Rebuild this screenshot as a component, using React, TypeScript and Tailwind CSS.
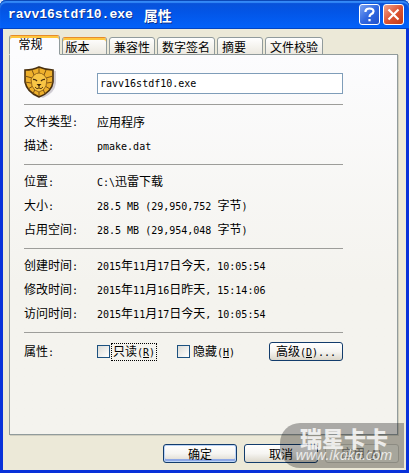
import React, { useState } from 'react';
import { clsx } from 'clsx';

interface Row {
  label: string;
  value: string;
}

const tabs = [
  { id: 'general', title: '常规', width: 'w-[51px]' },
  { id: 'version', title: '版本', width: 'w-[45px]' },
  { id: 'compat', title: '兼容性', width: 'w-[46px]' },
  { id: 'signature', title: '数字签名', width: 'w-[58px]' },
  { id: 'summary', title: '摘要', width: 'w-[46px]' },
  { id: 'checksum', title: '文件校验', width: 'w-[58px]' },
];

const sections: Row[][] = [
  [
    { label: '文件类型:', value: '应用程序' },
    { label: '描述:', value: 'pmake.dat' },
  ],
  [
    { label: '位置:', value: 'C:\\迅雷下载' },
    { label: '大小:', value: '28.5 MB (29,950,752 字节)' },
    { label: '占用空间:', value: '28.5 MB (29,954,048 字节)' },
  ],
  [
    { label: '创建时间:', value: '2015年11月17日今天, 10:05:54' },
    { label: '修改时间:', value: '2015年11月16日昨天, 15:14:06' },
    { label: '访问时间:', value: '2015年11月17日今天, 10:05:54' },
  ],
];

// Latin runs are half the width of a Chinese character
const Mixed = ({ text }: { text: string }) => (
  <span className="whitespace-pre">
    {text.split(/([ -~]+)/).map((part, i) =>
      i % 2 === 1 ? (
        <span key={i} className="font-['DejaVu_Sans_Mono',monospace] text-[10px]">
          {part}
        </span>
      ) : (
        part
      )
    )}
  </span>
);

const Mnemonic = ({ text, letter }: { text: string; letter: string }) => (
  <span className="whitespace-pre">
    {text}
    <span className="font-['DejaVu_Sans_Mono',monospace] text-[10px]">
      (<u>{letter}</u>)
    </span>
  </span>
);

const LionIcon = () => (
  <svg width="34" height="34" viewBox="0 0 34 34" aria-hidden="true">
    <path d="M3 5Q11 4 18 2Q25 5 32 5V17Q31 27 19 32Q7 28 4 18Z" fill="#b9b4bd" opacity=".65" />
    <path d="M1 4Q9 4 15 1Q22 4 29 4V16Q28 26 15 31Q3 26 1 16Z" fill="#eeb02c" stroke="#49300f" strokeWidth="1.6" />
    <path
      d="M8 4L10 9M15 2V7M22 4L20 9M1 10L8 12M29 10L22 12M1 16L7 17M29 16L23 17M4 23L9 20M26 23L21 20M9 28L11 23M21 28L19 23M15 26V30"
      stroke="#7a5214"
      strokeWidth="1"
    />
    <path d="M10 9Q15 5 20 9L23 13L22 20Q20 25 15 26Q10 25 8 20L7 13Z" fill="#f8c545" stroke="#8a5c18" strokeWidth=".9" />
    <path d="M9 13.500Q11 13 13 15M21 13.500Q19 13 17 15" fill="none" stroke="#49300f" strokeWidth="1.4" />
    <path d="M12.500 18H17.500L15 20.500Z" fill="#3b250b" />
    <path d="M15 20V22M11 21Q13 24 15 22Q17 24 19 21" fill="none" stroke="#5b3c10" strokeWidth="1" />
  </svg>
);

const PushButton = ({
  children,
  isDefault = false,
  disabled = false,
}: {
  children: React.ReactNode;
  isDefault?: boolean;
  disabled?: boolean;
}) => (
  <button
    type="button"
    disabled={disabled}
    className={clsx(
      'flex h-[19px] w-[74px] items-center justify-center rounded-[3px] border leading-4',
      disabled
        ? 'border-[#c9c7ba] bg-[#f0eee0] text-[#85847a]'
        : 'border-[#123c6c] bg-linear-to-b from-white via-[#f6f5f2] to-[#dcd7cb]',
      isDefault && 'shadow-[inset_0_0_0_1px_#bcd4f6,inset_0_-2px_0_1px_#8ea8e6]'
    )}
  >
    {children}
  </button>
);

const CheckBox = ({ text, letter, focused = false }: { text: string; letter: string; focused?: boolean }) => (
  <label className="flex w-20 items-center">
    <input
      type="checkbox"
      className="mr-px size-[13px] shrink-0 appearance-none border border-[#1c5180] bg-linear-to-br from-[#dcdcd7] to-white checked:bg-[#21a121]"
    />
    <span className={clsx('border px-px leading-[14px]', focused ? 'border-dotted border-black' : 'border-transparent')}>
      <Mnemonic text={text} letter={letter} />
    </span>
  </label>
);

const TitleBar = () => (
  <header className="flex h-[29px] shrink-0 items-center gap-[3px] rounded-t-md bg-linear-to-b from-[#0a51d5] from-0% via-[#0355e6] via-40% to-[#0262fb] pr-[5px] pl-2 shadow-[inset_0_1px_0_#0c48b7,inset_0_3px_1px_#3489f7,inset_0_-1px_0_#0144c4]">
    <h1 className="flex flex-1 items-center gap-[11px] text-[14px] leading-5 font-bold text-white [text-shadow:1px_1px_#0b2f8c]">
      <span className="font-['Liberation_Mono',monospace] text-[13px]">ravv16stdf10.exe</span>
      <span>属性</span>
    </h1>
    <button
      type="button"
      aria-label="帮助"
      className="flex size-[21px] items-center justify-center rounded-[3px] border border-white bg-linear-to-br from-[#7ba2f2] via-[#3268e0] to-[#1e50cb]"
    >
      <svg width="13" height="15" viewBox="0 0 13 15" fill="none" stroke="#fff" strokeWidth="2.200">
        <path d="M2.500 5V4Q3 1.500 6.500 1.500Q10.500 1.500 10.500 4.500Q10.500 6 8 7.200Q6.500 8 6.500 10" />
        <path d="M6.500 12V14.300" />
      </svg>
    </button>
    <button
      type="button"
      aria-label="关闭"
      className="flex size-[21px] items-center justify-center rounded-[3px] border border-white bg-linear-to-br from-[#f0a18c] via-[#dd5433] to-[#c23a14]"
    >
      <svg width="13" height="13" viewBox="0 0 13 13" stroke="#fff" strokeWidth="2.200">
        <path d="M1.500 1.500L11.500 11.500M11.500 1.500L1.500 11.500" />
      </svg>
    </button>
  </header>
);

const Watermark = () => (
  <div className="pointer-events-none absolute right-[5px] bottom-[5px] flex h-[45px] w-[124px] flex-col items-center rounded-l-[20px] bg-black/30 pt-1 pl-1 text-white/80">
    <span className="text-[22px] leading-5 font-black">瑞星卡卡</span>
    <span className="font-['Open_Sans',sans-serif] text-[14px] leading-4 italic">www.ikaka.com</span>
  </div>
);

export default function App() {
  const [active, setActive] = useState('general');
  const [name, setName] = useState('ravv16stdf10.exe');

  return (
    <div className="bg-[#d9e4f8]">
      <div className="relative flex min-h-screen w-full flex-col rounded-t-md bg-[#0831d9] font-['Noto_Sans_CJK_SC',sans-serif] text-[12px] text-black">
        <TitleBar />
        <main className="mr-[3px] mb-[3px] ml-[3px] flex flex-1 flex-col bg-[#ece9d8] pt-1.5 pr-2 pb-[7px] pl-1.5">
          <div role="tablist" className="relative -mb-px flex items-end gap-0.5">
            {tabs.map((tab) => (
              <button
                key={tab.id}
                type="button"
                role="tab"
                aria-selected={active === tab.id}
                onClick={() => setActive(tab.id)}
                className={clsx(
                  'rounded-t-[3px] border whitespace-nowrap',
                  tab.width,
                  active === tab.id
                    ? 'h-5 border-[#919b9c] border-t-[#e68b2c] border-b-[#fcfcfe] bg-[#fcfcfe] pr-2 pb-0.5 pl-0 leading-4 shadow-[inset_0_2px_0_#ffc73c]'
                    : 'h-[18px] border-[#919b9c] bg-linear-to-b from-white to-[#ece9e0] leading-[17px]',
                  tab.id === 'version' && active !== tab.id && 'border-t-[#e68b2c] pr-3.5 shadow-[inset_0_2px_0_#ffc73c]',
                  tab.id === 'summary' && 'pr-3'
                )}
              >
                {tab.title}
              </button>
            ))}
          </div>

          <section className="flex-1 border border-[#919b9c] bg-linear-to-b from-[#fcfcfe] to-[#f4f3ee] to-60% pt-[11px] pr-[54px] pl-3.5 shadow-[1px_1px_0_#d0cebf]">
            <div className="flex h-[38px] items-start">
              <div className="w-[73px] shrink-0">
                <LionIcon />
              </div>
              <input
                type="text"
                aria-label="文件名"
                value={name}
                onChange={(e) => setName(e.target.value)}
                className="mt-[7px] h-[21px] min-w-0 flex-1 border border-[#7f9db9] bg-white px-0.5 font-['DejaVu_Sans_Mono',monospace] text-[10px] outline-none"
              />
            </div>

            {sections.map((rows, i) => (
              <dl key={i} className="border-t border-[#9d9d9a] pt-[5px] pb-1.5">
                {rows.map((row) => (
                  <div key={row.label} className="flex h-6 items-center leading-4">
                    <dt className="w-[73px] shrink-0">
                      <Mixed text={row.label} />
                    </dt>
                    <dd>
                      <Mixed text={row.value} />
                    </dd>
                  </div>
                ))}
              </dl>
            ))}

            <div className="flex items-center border-t border-[#9d9d9a] pt-[9px]">
              <span className="w-[73px] shrink-0 leading-4">
                <Mixed text="属性:" />
              </span>
              <CheckBox text="只读" letter="R" focused />
              <CheckBox text="隐藏" letter="H" />
              <div className="ml-auto">
                <PushButton>
                  <Mnemonic text="高级" letter="D" />
                  <Mixed text="..." />
                </PushButton>
              </div>
            </div>
          </section>

          <footer className="-mr-px flex justify-end gap-[7px] pt-[9px]">
            <PushButton isDefault>确定</PushButton>
            <PushButton>取消</PushButton>
            <PushButton disabled>
              <Mnemonic text="应用" letter="A" />
            </PushButton>
          </footer>
        </main>
        <Watermark />
      </div>
    </div>
  );
}
